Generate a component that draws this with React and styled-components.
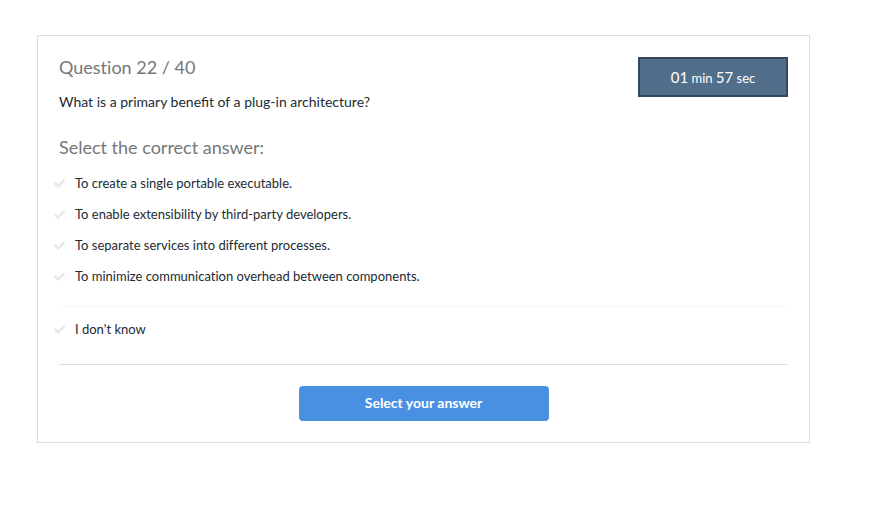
import React, { useState } from "react";
import styled, { createGlobalStyle } from "styled-components";

const GlobalStyle = createGlobalStyle`
  *, *::before, *::after { box-sizing: border-box; }
  body {
    margin: 0;
    background: #fff;
    color: #222b33;
    font-family: Lato, "Open Sans", sans-serif;
    font-size: 14px;
    line-height: 20px;
  }
`;

const Page = styled.main`
  padding: 35px 71px 35px 37px;
`;

const Card = styled.form`
  border: 1px solid #dcdcdc;
  padding: 21px;
`;

const Header = styled.header`
  display: flex;
  justify-content: space-between;
  align-items: flex-start;
  gap: 20px;
`;

const Heading = styled.h2`
  margin: 0;
  color: #74777b;
  font-size: 18px;
  font-weight: 400;
  line-height: 20px;
  font-variant-ligatures: none;
`;

const Question = styled.p`
  margin: 15px 0 0;
`;

const Timer = styled.div`
  flex: none;
  display: flex;
  align-items: center;
  justify-content: center;
  width: 150px;
  height: 40px;
  border: 2px solid #34495e;
  background: #516e8b;
  color: #fff;
  font-size: 13px;
`;

const Digits = styled.span`
  font-size: 15px;
`;

const Answers = styled.fieldset`
  margin: 25px 0 0;
  padding: 0;
  border: 0;
  min-width: 0;
`;

const Legend = styled(Heading).attrs({ as: "legend" })`
  padding: 0;
  margin-bottom: 11px;
`;

const Option = styled.label`
  display: flex;
  align-items: center;
  gap: 9px;
  height: 31px;
  margin-left: -6px;
  font-size: 13px;
  font-variant-ligatures: none;
  cursor: pointer;
`;

const OptionText = styled.span`
  padding-bottom: 2px;
`;

const Radio = styled.input`
  position: absolute;
  width: 1px;
  height: 1px;
  margin: 0;
  opacity: 0;
`;

const Check = styled.svg`
  flex: none;
  width: 13px;
  height: 13px;
  fill: #e8e8e8;

  ${Radio}:checked + & { fill: #4990e2; }
  ${Radio}:focus-visible + & { outline: 1px solid #4990e2; }
`;

const Divider = styled.hr`
  margin: 14px 0 7px;
  border: 0;
  border-top: 1px solid #f6f6f6;
`;

const Footer = styled.footer`
  display: flex;
  justify-content: center;
  margin-top: 19px;
  padding-top: 21px;
  border-top: 1px solid #dcdcdc;
`;

const Submit = styled.button`
  width: 250px;
  height: 35px;
  padding: 0 0 2px;
  border: 0;
  border-radius: 4px;
  background: #4990e2;
  color: #fff;
  font-family: inherit;
  font-size: 14px;
  font-weight: 700;
  cursor: pointer;
`;

const answers = [
  "To create a single portable executable.",
  "To enable extensibility by third-party developers.",
  "To separate services into different processes.",
  "To minimize communication overhead between components.",
];

function AnswerOption({ text, selected, onSelect }) {
  return (
    <Option>
      <Radio
        type="radio"
        name="answer"
        value={text}
        checked={selected === text}
        onChange={() => onSelect(text)}
      />
      <Check viewBox="0 0 1792 1792" aria-hidden="true">
        <path d="M1671 566q0 40-28 68l-724 724-136 136q-28 28-68 28t-68-28l-136-136-362-362q-28-28-28-68t28-68l136-136q28-28 68-28t68 28l294 295 656-657q28-28 68-28t68 28l136 136q28 28 28 68z" />
      </Check>
      <OptionText>{text}</OptionText>
    </Option>
  );
}

export default function App() {
  const [selected, setSelected] = useState(null);
  return (
    <>
      <GlobalStyle />
      <Page>
        <Card onSubmit={(e) => e.preventDefault()}>
          <Header>
            <div>
              <Heading>Question 22 / 40</Heading>
              <Question>What is a primary benefit of a plug-in architecture?</Question>
            </div>
            <Timer role="timer">
              <span>
                <Digits>01</Digits> min <Digits>57</Digits> sec
              </span>
            </Timer>
          </Header>
          <Answers>
            <Legend>Select the correct answer:</Legend>
            {answers.map((text) => (
              <AnswerOption key={text} text={text} selected={selected} onSelect={setSelected} />
            ))}
            <Divider />
            <AnswerOption text="I don't know" selected={selected} onSelect={setSelected} />
          </Answers>
          <Footer>
            <Submit type="submit">Select your answer</Submit>
          </Footer>
        </Card>
      </Page>
    </>
  );
}
